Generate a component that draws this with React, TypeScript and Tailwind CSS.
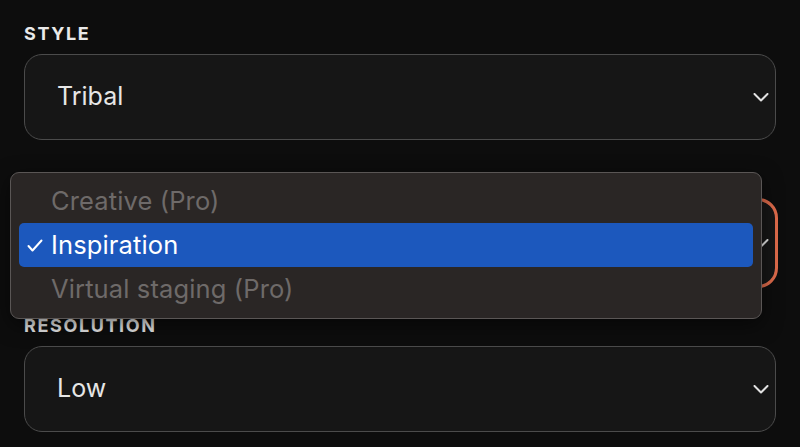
const FONT = { fontFamily: 'Inter, "Noto Sans", sans-serif' }

function Chevron() {
  return (
    <svg width="16" height="9" viewBox="0 0 16 9" fill="none" className="shrink-0">
      <polyline points="1.5,1 8,7.5 14.5,1" stroke="#e2e2e2" strokeWidth="2" strokeLinecap="round" strokeLinejoin="round" />
    </svg>
  )
}

function Field({ label, value, focused, first }: { label: string; value: string; focused?: boolean; first?: boolean }) {
  return (
    <div className={first ? '' : 'mt-[31px]'}>
      <div className="text-[18px] leading-[18px] font-bold tracking-[0.09em] text-[#e9e9e9] uppercase">{label}</div>
      <div
        className={`mt-[11px] h-[86px] rounded-[18px] border-[1.5px] border-[#4b4b4b] bg-[#161616] flex items-center justify-between pl-[32px] pr-[6px] ${
          focused ? 'outline-[3px] outline-solid outline-[#df6b4b] outline-offset-[-1px] bg-[#0f0f0f]' : ''
        }`}
      >
        <span className="text-[25px] text-[#e6e6e6]">{value}</span>
        <Chevron />
      </div>
    </div>
  )
}

const OPTIONS = [
  { label: 'Creative (Pro)', disabled: true },
  { label: 'Inspiration', selected: true },
  { label: 'Virtual staging (Pro)', disabled: true },
]

export default function App() {
  return (
    <div className="relative w-[800px] h-[447px] overflow-hidden bg-[#0d0d0d]" style={FONT}>
      <div className="px-[24px] pt-[25px]">
        <Field first label="Style" value="Tribal" />
        <Field label="Mode" value="Inspiration" focused />
        <Field label="Resolution" value="Low" />
      </div>

      {/* native select menu open over the Mode field */}
      <div className="absolute left-[10px] top-[172px] w-[752px] rounded-[9px] border border-[#5a5655] bg-[#2a2625] px-[8px] pt-[6px] pb-[7px] shadow-[0_6px_20px_rgba(0,0,0,0.5)]">
        {OPTIONS.map((o) => (
          <div
            key={o.label}
            className={`relative h-[44px] flex items-center pl-[32px] rounded-[5px] text-[25.5px] tracking-[0.005em] ${
              o.selected ? 'bg-[#1c58bd] text-white' : 'text-[#6e6a69]'
            }`}
          >
            {o.selected && (
              <svg width="16" height="13" viewBox="0 0 16 13" fill="none" className="absolute left-[8px] top-[16px]">
                <path d="M1.5 7 L5.5 11.5 L14.5 1.5" stroke="#fff" strokeWidth="2" strokeLinecap="round" strokeLinejoin="round" />
              </svg>
            )}
            {o.label}
          </div>
        ))}
      </div>
    </div>
  )
}
